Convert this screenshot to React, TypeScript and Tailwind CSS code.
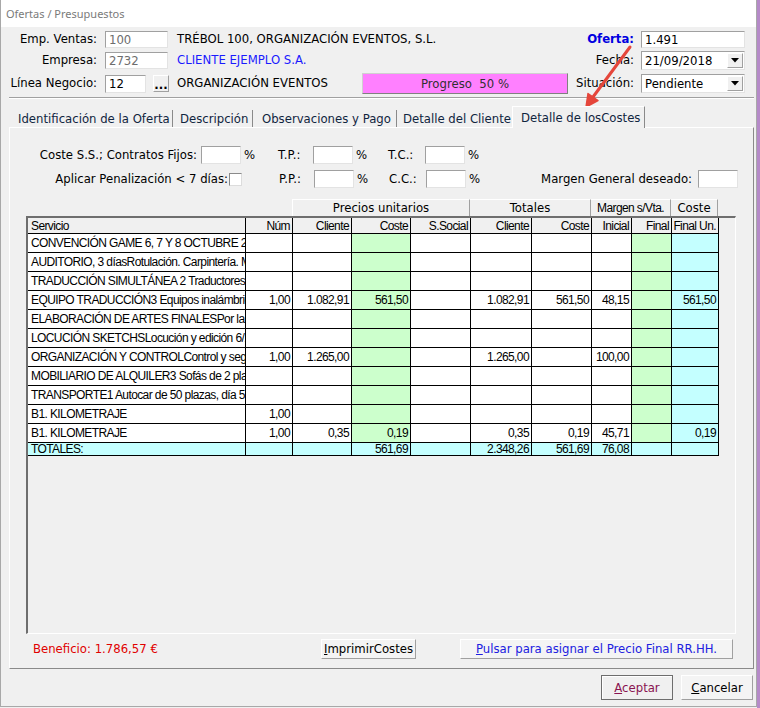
import React from "react";

const ui = "font-['DejaVu_Sans',sans-serif] text-[11.7px] leading-[14px]";
const narrow =
  "font-['Liberation_Sans','Arial',sans-serif] text-[12px] leading-[14px] tracking-[-0.6px]";

const sunken =
  "bg-white border border-t-[#a0a0a0] border-l-[#a0a0a0] border-r-[#e3e3e3] border-b-[#e3e3e3]";
const raised =
  "border border-t-white border-l-white border-r-[#a0a0a0] border-b-[#a0a0a0]";

const Field = ({
  className,
  value,
  dim,
}: {
  className: string;
  value?: string;
  dim?: boolean;
}) => (
  <div
    className={`${sunken} ${className} flex items-center pl-[3px] overflow-hidden whitespace-nowrap ${
      dim ? "text-[#6d6d6d]" : "text-black"
    }`}
  >
    {value}
  </div>
);

const Combo = ({ value }: { value: string }) => (
  <div
    className={`${sunken} w-[104px] h-[19px] flex items-center pl-[3px] pr-[1px]`}
  >
    <span className="flex-1">{value}</span>
    <div
      className={`${raised} w-[16px] h-[15px] bg-[#f0f0f0] flex items-center justify-center`}
    >
      <svg width="8" height="5" viewBox="0 0 8 5">
        <path d="M0 0 H8 L4 4.5 Z" fill="#000" />
      </svg>
    </div>
  </div>
);

const cols = [
  "w-[218px]",
  "w-[47px]",
  "w-[59px]",
  "w-[59px]",
  "w-[60px]",
  "w-[61px]",
  "w-[60px]",
  "w-[40px]",
  "w-[40px]",
  "w-[47px]",
];

const colBg = [
  "bg-white",
  "bg-white",
  "bg-white",
  "bg-[#ccffcc]",
  "bg-white",
  "bg-white",
  "bg-white",
  "bg-white",
  "bg-[#ccffcc]",
  "bg-[#c4ffff]",
];

const headers = [
  "Servicio",
  "Núm",
  "Cliente",
  "Coste",
  "S.Social",
  "Cliente",
  "Coste",
  "Inicial",
  "Final",
  "Final Un.",
];

const rows: string[][] = [
  ["CONVENCIÓN GAME 6, 7 Y 8 OCTUBRE 2018", "", "", "", "", "", "", "", "", ""],
  ["AUDITORIO, 3 díasRotulación. Carpintería. Moqueta", "", "", "", "", "", "", "", "", ""],
  ["TRADUCCIÓN SIMULTÁNEA 2 Traductores simultáneos", "", "", "", "", "", "", "", "", ""],
  ["EQUIPO TRADUCCIÓN3 Equipos inalámbricos", "1,00", "1.082,91", "561,50", "", "1.082,91", "561,50", "48,15", "", "561,50"],
  ["ELABORACIÓN DE ARTES FINALESPor la elaboración", "", "", "", "", "", "", "", "", ""],
  ["LOCUCIÓN SKETCHSLocución y edición 6/10", "", "", "", "", "", "", "", "", ""],
  ["ORGANIZACIÓN Y CONTROLControl y seguimiento", "1,00", "1.265,00", "", "", "1.265,00", "", "100,00", "", ""],
  ["MOBILIARIO DE ALQUILER3 Sofás de 2 plazas", "", "", "", "", "", "", "", "", ""],
  ["TRANSPORTE1 Autocar de 50 plazas, día 5", "", "", "", "", "", "", "", "", ""],
  ["B1. KILOMETRAJE", "1,00", "", "", "", "", "", "", "", ""],
  ["B1. KILOMETRAJE", "1,00", "0,35", "0,19", "", "0,35", "0,19", "45,71", "", "0,19"],
];

const totals = ["TOTALES:", "", "", "561,69", "", "2.348,26", "561,69", "76,08", "", ""];

const Cell = ({ i, text, bg }: { i: number; text: string; bg: string }) => (
  <div
    className={`${cols[i]} ${bg} h-full border-r border-black flex items-center overflow-hidden whitespace-nowrap ${
      i === 0 ? "pl-[3px]" : "justify-end pr-[2px]"
    }`}
  >
    {text}
  </div>
);

const tabs = [
  { label: "Identificación de la Oferta", cls: "w-[163px] pl-[8px]" },
  { label: "Descripción", cls: "w-[80px] pl-[7px]" },
  { label: "Observaciones y Pago", cls: "w-[144px] pl-[9px]" },
  { label: "Detalle del Cliente", cls: "w-[115px] pl-[6px] border-r-0" },
];

export default function App() {
  return (
    <div className={`${ui} relative w-[760px] h-[708px] overflow-hidden bg-[#f0f0f0] text-black flex`}>
      <div className="w-[757px] h-[707px] flex flex-col border-l border-b border-r border-[#a8a8a8]">
        {/* title bar */}
        <div className="h-[27px] shrink-0 bg-white flex items-center pl-[5px] font-['Noto_Sans',sans-serif] text-[11px] text-[#7a7a7a]">
          Ofertas / Presupuestos
        </div>

        {/* header fields */}
        <div className="h-[70px] shrink-0 flex flex-col">
          <div className="mt-[4px] h-[17px] flex items-center">
            <div className="w-[96px] text-right -mt-[2px]">Emp. Ventas:</div>
            <Field className="ml-[8px] w-[63px] h-[17px]" value="100" dim />
            <div className="ml-[9px] w-[400px] whitespace-nowrap -mt-[2px]">TRÉBOL 100, ORGANIZACIÓN EVENTOS, S.L.</div>
            <div className="w-[57px] text-right font-bold text-[#0000e0] -mt-[2px]">Oferta:</div>
            <Field className="ml-[7px] w-[104px] h-[17px]" value="1.491" />
          </div>
          <div className="mt-[3px] h-[19px] flex items-center">
            <div className="w-[96px] text-right -mt-[2px]">Empresa:</div>
            <Field className="ml-[8px] w-[63px] h-[17px]" value="2732" dim />
            <div className="ml-[9px] w-[400px] text-[#1a1aff] -mt-[2px]">CLIENTE EJEMPLO S.A.</div>
            <div className="w-[57px] text-right -mt-[2px]">Fecha:</div>
            <div className="ml-[7px]">
              <Combo value="21/09/2018" />
            </div>
          </div>
          <div className="mt-[3px] h-[21px] flex items-center">
            <div className="w-[96px] text-right whitespace-nowrap -mt-[2px]">Línea Negocio:</div>
            <Field className="ml-[8px] w-[41px] h-[18px]" value="12" />
            <div
              className={`${raised} ml-[7px] w-[16px] h-[17px] bg-[#f0f0f0] flex items-end justify-center font-bold leading-[12px]`}
            >
              ...
            </div>
            <div className="ml-[8px] w-[185px] whitespace-nowrap -mt-[2px]">ORGANIZACIÓN EVENTOS</div>
            <div className="w-[206px] h-[21px] bg-[#ff80ff] border border-t-[#d0d0d0] border-l-[#d0d0d0] border-r-[#808080] border-b-[#808080] flex items-center justify-center text-[#303030] whitespace-pre">
              Progreso  50 %
            </div>
            <div className="w-[66px] text-right -mt-[2px]">Situación:</div>
            <div className="ml-[7px]">
              <Combo value="Pendiente" />
            </div>
          </div>
        </div>

        {/* separator */}
        <div className="ml-[8px] w-[745px] h-[2px] shrink-0 border-t border-[#a0a0a0] border-b border-b-white" />

        {/* tabs */}
        <div className="mt-[7px] h-[21px] shrink-0 ml-[9px] flex items-end text-[#10253f] relative z-10">
          {tabs.map((t) => (
            <div
              key={t.label}
              className={`${t.cls} h-[17px] border-r border-[#8a8a8a] flex items-center whitespace-nowrap`}
            >
              {t.label}
            </div>
          ))}
          <div className="w-[133px] h-[22px] -mb-px pl-[8px] bg-[#f0f0f0] border-l border-t border-white border-r border-r-[#8a8a8a] flex items-center whitespace-nowrap">
            Detalle de losCostes
          </div>
        </div>

        {/* tab panel */}
        <div className="ml-[8px] w-[745px] h-[542px] shrink-0 border border-t-white border-l-white border-r-[#8a8a8a] border-b-[#8a8a8a] flex flex-col">
          <div className="mt-[18px] h-[18px] flex items-center whitespace-nowrap">
            <div className="w-[187px] text-right">Coste S.S.; Contratos Fijos:</div>
            <Field className="ml-[4px] w-[40px] h-[18px]" />
            <div className="ml-[3px] w-[34px]">%</div>
            <div className="w-[35px]">T.P.:</div>
            <Field className="w-[40px] h-[18px]" />
            <div className="ml-[3px] w-[32px]">%</div>
            <div className="w-[37px]">T.C.:</div>
            <Field className="w-[40px] h-[18px]" />
            <div className="ml-[3px]">%</div>
          </div>
          <div className="mt-[6px] h-[18px] flex items-center whitespace-nowrap">
            <div className="w-[218px] text-right">Aplicar Penalización &lt; 7 días:</div>
            <div className="ml-px w-[13px] h-[13px] bg-white border border-[#8a8a8a] border-r-[#dcdcdc] border-b-[#dcdcdc]" />
            <div className="ml-[37px] w-[35px]">P.P.:</div>
            <Field className="w-[40px] h-[18px]" />
            <div className="ml-[3px] w-[32px]">%</div>
            <div className="w-[37px]">C.C.:</div>
            <Field className="w-[40px] h-[18px]" />
            <div className="ml-[3px] w-[20px]">%</div>
            <div className="w-[203px] text-right">Margen General deseado:</div>
            <Field className="ml-[6px] w-[40px] h-[18px]" />
          </div>

          {/* group headers */}
          <div className="mt-[11px] ml-[282px] h-[17px] flex">
            <div className="w-[178px] h-full border-l border-t border-white border-r border-r-[#a0a0a0] flex items-center justify-center">
              Precios unitarios
            </div>
            <div className="w-[121px] h-full border-t border-white border-r border-r-[#a0a0a0] flex items-center justify-center">
              Totales
            </div>
            <div className={`${narrow} w-[80px] h-full border-t border-white border-r border-r-[#a0a0a0] flex items-center justify-center whitespace-nowrap`}>
              Margen s/Vta.
            </div>
            <div className="w-[47px] h-full border-t border-white border-r border-r-[#a0a0a0] flex items-center justify-center">
              Coste
            </div>
          </div>

          {/* grid */}
          <div className={`${narrow} ml-[16px] w-[710px] h-[418px] border-t-2 border-l-2 border-[#6e6e6e] border-r border-b border-r-white border-b-white`}>
            <div className="flex h-[16px] border-b border-black w-[691px]">
              {headers.map((h, i) => (
                <Cell key={i} i={i} text={h} bg="bg-[#f0f0f0]" />
              ))}
            </div>
            {rows.map((r, ri) => (
              <div key={ri} className="flex h-[19px] border-b border-black w-[691px]">
                {r.map((t, i) => (
                  <Cell key={i} i={i} text={t} bg={colBg[i]} />
                ))}
              </div>
            ))}
            <div className="flex h-[13px] border-b border-black w-[691px] leading-[12px]">
              {totals.map((t, i) => (
                <Cell key={i} i={i} text={t} bg="bg-[#c4ffff]" />
              ))}
            </div>
          </div>

          {/* bottom row */}
          <div className="mt-[5px] h-[20px] flex items-center whitespace-nowrap">
            <div className="w-[311px] pl-[23px] text-[#e00000]">Beneficio: 1.786,57 €</div>
            <div className={`${raised} w-[95px] h-[20px] bg-[#f4f4f4] flex items-center justify-center`}>
              <span>
                <span className="underline">I</span>mprimirCostes
              </span>
            </div>
            <div className={`${raised} ml-[44px] w-[273px] h-[20px] bg-[#f4f4f4] flex items-center justify-center text-[#2020e0]`}>
              <span>
                <span className="underline">P</span>ulsar para asignar el Precio Final RR.HH.
              </span>
            </div>
          </div>
        </div>

        {/* dialog buttons */}
        <div className="mt-[6px] h-[25px] flex justify-end pr-[3px] gap-[8px]">
          <div className="w-[72px] h-[25px] bg-[#f0f0f0] border border-[#6d6d6d] shadow-[inset_1px_1px_0_#ffffff] flex items-center justify-center text-[#8a1450]">
            <span>
              <span className="underline">A</span>ceptar
            </span>
          </div>
          <div className="w-[72px] h-[25px] bg-[#f4f4f4] border border-t-white border-l-white border-r-[#a0a0a0] border-b-[#a0a0a0] flex items-center justify-center">
            <span>
              <span className="underline">C</span>ancelar
            </span>
          </div>
        </div>
      </div>
      <div className="w-[3px] h-full bg-[#b58ac8]" />

      {/* annotation arrow */}
      <svg className="absolute left-0 top-0 pointer-events-none" width="760" height="708">
        <line x1="630" y1="47" x2="593" y2="97" stroke="#e5463b" strokeWidth="3" strokeLinecap="round" />
        <path d="M586 107 L598 100.5 L588 93.5 Z" fill="#e5463b" stroke="#e5463b" strokeWidth="1.5" strokeLinejoin="round" />
      </svg>
    </div>
  );
}
